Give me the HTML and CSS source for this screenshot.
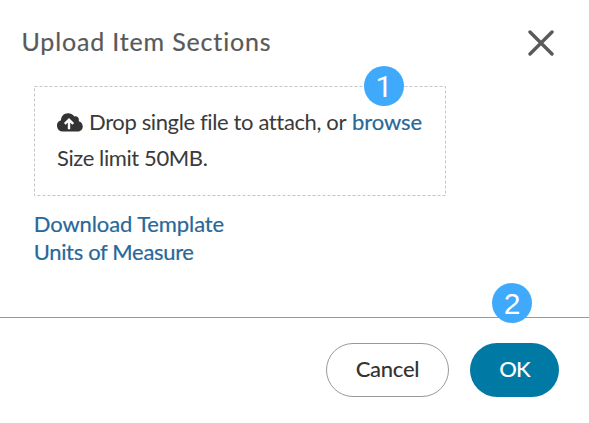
FILE: index.html
```
<!DOCTYPE html>
<html lang="en">
<head>
<meta charset="utf-8">
<title>Upload Item Sections</title>
<link rel="stylesheet" href="styles.css">
</head>
<body>
<main class="dialog">
  <header class="header">
    <h1 class="title">Upload Item Sections</h1>
    <button class="close" aria-label="Close"><svg width="26" height="26" viewBox="0 0 26 26"><path d="M2 2 24 24M24 2 2 24"/></svg></button>
  </header>
  <section class="content">
    <div class="dropzone">
      <svg class="edge" width="412" height="110"><rect x=".5" y=".5" width="411" height="109"/></svg>
      <p class="line"><svg class="cloud" width="26" height="19" viewBox="0 0 26 19"><path class="cloud-shape" d="M6 18.500A5.800 5.800 0 0 1 4 7.200C4 3 7 .2 11 .2 14 .2 16.200 1.600 17.300 3.400 20 2.400 22.600 4.800 21.800 8.200 27.500 9.800 27 18.500 20.800 18.500Z"/><path class="arrow" d="M12 16.200V7M7.800 10.900 12 6.700 16.200 10.900"/></svg><span class="prompt">Drop single file to attach, or</span><a class="link browse">browse</a></p>
      <p class="line limit">Size limit 50MB.</p>
      <span class="badge badge-one">1</span>
    </div>
    <nav class="links"><a class="link template">Download Template</a><a class="link units">Units of Measure</a></nav>
  </section>
  <footer class="footer">
    <button class="button cancel">Cancel</button>
    <button class="button ok">OK</button>
    <span class="badge badge-two">2</span>
  </footer>
</main>
</body>
</html>
```
FILE: styles.css
```
* { box-sizing: border-box; }
body { margin: 0; background: #fff; color: #3a3a3a; font: 22px/36px Lato, "Noto Sans", sans-serif; }
.dialog { width: 589px; height: 423px; display: flex; flex-direction: column; overflow: hidden; }
.header { height: 86px; padding: 0 34px 0 21.5px; display: flex; justify-content: space-between; }
.title { margin: 23px 0 0; font-size: 25px; line-height: 36px; font-weight: 400; color: #595959; letter-spacing: .84px; white-space: nowrap; -webkit-text-stroke: .2px #595959; }
button { font: inherit; padding: 0; border: 0; background: none; }
.close { width: 28px; height: 28px; margin-top: 29px; display: grid; place-items: center; }
.close svg { display: block; fill: none; stroke: #595959; stroke-width: 3.4; stroke-linecap: round; }
.content { height: 231px; padding-left: 34px; }
.dropzone { position: relative; width: 412px; height: 110px; padding: 18px 23px; }
.edge { position: absolute; inset: 0; fill: none; stroke: #c6c6c6; stroke-dasharray: 3 2; }
.line { margin: 0; height: 36px; display: flex; align-items: center; white-space: nowrap; }
.cloud { flex: none; margin-right: 6px; }
.cloud-shape { fill: #333; }
.arrow { fill: none; stroke: #fff; stroke-width: 2.4; }
.prompt { width: 263px; letter-spacing: -.37px; }
.limit { letter-spacing: -.4px; }
.link { color: #286898; -webkit-text-stroke: .2px #286898; }
.browse { letter-spacing: -.1px; }
.links { display: flex; flex-direction: column; margin: 14px 0 0 -.3px; line-height: 28px; white-space: nowrap; }
.template { letter-spacing: -.1px; }
.units { letter-spacing: -.33px; }
.footer { position: relative; height: 106px; border-top: 1px solid #999; padding: 25px 30px 0; display: flex; justify-content: flex-end; gap: 21px; }
.button { height: 54px; border-radius: 27px; font-weight: 500; line-height: 50px; padding-bottom: 2px; }
.cancel { width: 123px; border: 1px solid #999; color: #333; letter-spacing: -.25px; }
.ok { width: 89px; background: #007aa5; color: #fff; letter-spacing: -1px; }
.badge { position: absolute; width: 40px; height: 40px; border-radius: 50%; background: #3fa9fc; color: #fff; font: 30px/42px "Liberation Sans", sans-serif; text-align: center; }
.badge-one { left: 330px; top: -20px; font-family: Roboto, sans-serif; }
.badge-two { left: 492px; top: -35px; }
```
